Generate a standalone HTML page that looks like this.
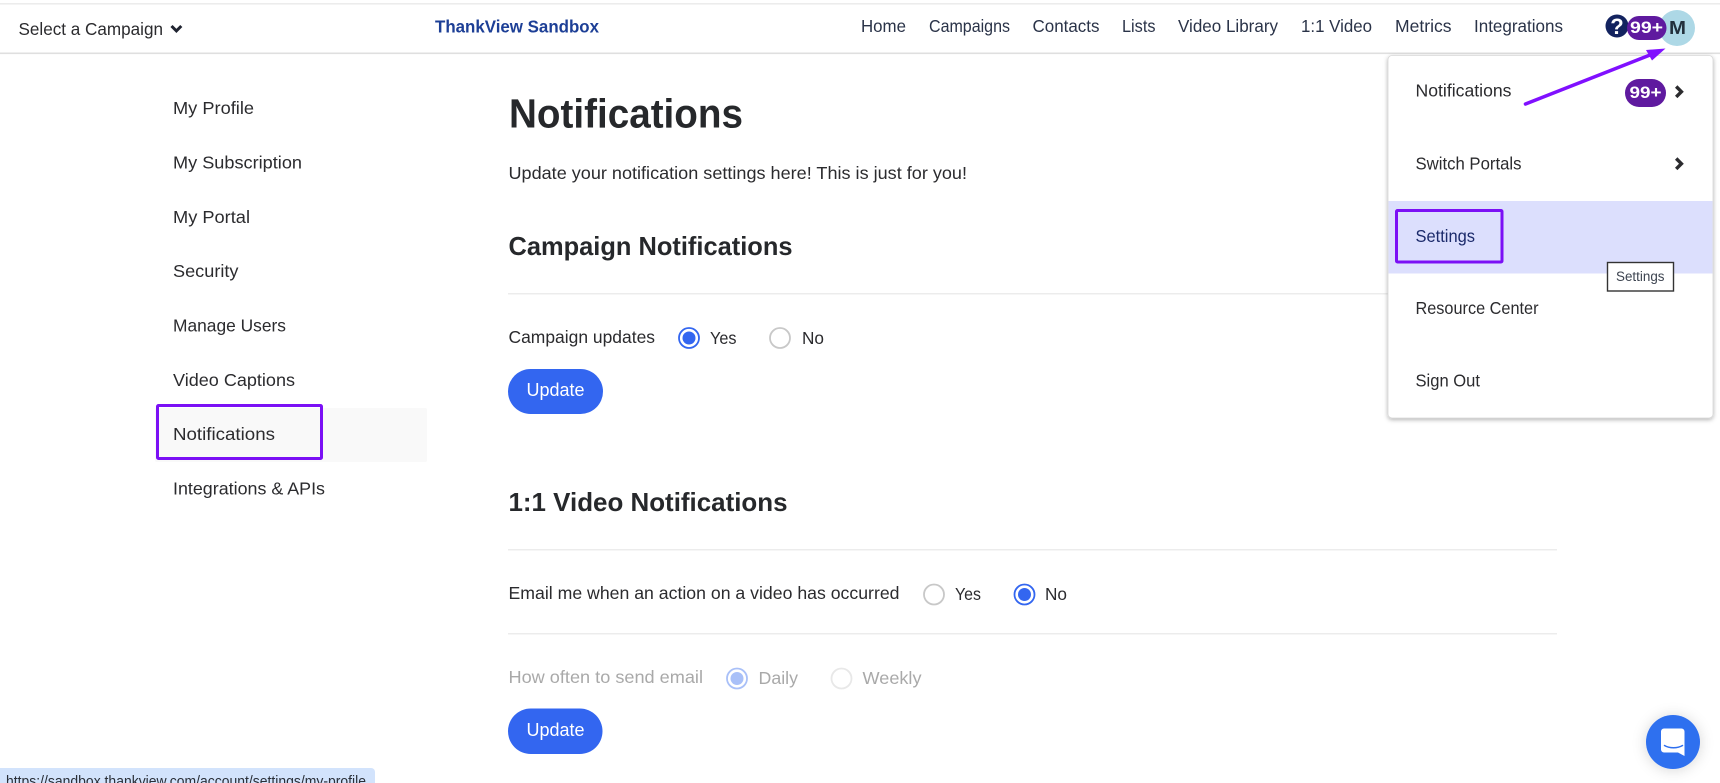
<!DOCTYPE html>
<html lang="en">
<head>
<meta charset="utf-8">
<title>Notifications</title>
<style>
html,body{margin:0;padding:0;width:1720px;height:783px;overflow:hidden;background:#fff}
svg{display:block;position:absolute;left:0;top:0}
text{font-family:"Liberation Sans",sans-serif;font-size:17.5px;fill:#2b2b2e}
.n{fill:#2a3348}
.h{font-weight:700}
.g{fill:#a9a9a9}
.w{fill:#fff}
</style>
</head>
<body>
<svg width="1720" height="783" viewBox="0 0 1720 783" xmlns="http://www.w3.org/2000/svg">
<defs>
<filter id="s" x="-10%" y="-10%" width="120%" height="120%"><feDropShadow dx="0" dy="1.5" stdDeviation="2" flood-color="#000" flood-opacity=".3"/></filter>
<filter id="c" x="-60%" y="-60%" width="220%" height="220%"><feDropShadow dx="0" dy="1" stdDeviation="7" flood-color="#000" flood-opacity=".16"/></filter>
</defs>
<rect width="1720" height="783" fill="#fff"/>
<!-- header -->
<rect x="0" y="3" width="1720" height="1.6" fill="#ececec"/>
<rect x="0" y="52.5" width="1720" height="1.6" fill="#dfdfdf"/>
<text x="18.5" y="35" textLength="144.5" lengthAdjust="spacingAndGlyphs">Select a Campaign</text>
<path d="M171.5 26l4.9 4.900 4.900-4.900" fill="none" stroke="#1f2330" stroke-width="3"/>
<text x="435" y="32.7" textLength="164" lengthAdjust="spacingAndGlyphs" class="h" style="fill:#1d3f96">ThankView Sandbox</text>
<text class="n" x="861" y="32" textLength="45" lengthAdjust="spacingAndGlyphs">Home</text>
<text class="n" x="929" y="32" textLength="81" lengthAdjust="spacingAndGlyphs">Campaigns</text>
<text class="n" x="1032.500" y="32" textLength="67" lengthAdjust="spacingAndGlyphs">Contacts</text>
<text class="n" x="1122" y="32" textLength="33.500" lengthAdjust="spacingAndGlyphs">Lists</text>
<text class="n" x="1178" y="32" textLength="100" lengthAdjust="spacingAndGlyphs">Video Library</text>
<text class="n" x="1301" y="32" textLength="71" lengthAdjust="spacingAndGlyphs">1:1 Video</text>
<text class="n" x="1395" y="32" textLength="56.500" lengthAdjust="spacingAndGlyphs">Metrics</text>
<text class="n" x="1474" y="32" textLength="89" lengthAdjust="spacingAndGlyphs">Integrations</text>
<circle cx="1617" cy="26" r="11.500" fill="#13235f"/>
<text class="w h" x="1617" y="34" text-anchor="middle" style="font-size:22px">?</text>
<circle cx="1677" cy="28" r="18" fill="#add8e6"/>
<rect x="1627" y="16" width="39.500" height="24" rx="12" fill="#5f1a9f"/>
<text class="w h" x="1630" y="33" textLength="33" lengthAdjust="spacingAndGlyphs" style="font-size:17px">99+</text>
<text class="h" x="1669" y="34" textLength="17" lengthAdjust="spacingAndGlyphs" style="fill:#22303c;font-size:18px">M</text>
<!-- sidebar -->
<rect x="155" y="408" width="272" height="54" rx="2" fill="#f9f9f9"/>
<text x="173" y="114" textLength="81" lengthAdjust="spacingAndGlyphs">My Profile</text>
<text x="173" y="168.400" textLength="129" lengthAdjust="spacingAndGlyphs">My Subscription</text>
<text x="173" y="222.800" textLength="77" lengthAdjust="spacingAndGlyphs">My Portal</text>
<text x="173" y="277.200" textLength="65.500" lengthAdjust="spacingAndGlyphs">Security</text>
<text x="173" y="331.600" textLength="113" lengthAdjust="spacingAndGlyphs">Manage Users</text>
<text x="173" y="386" textLength="122" lengthAdjust="spacingAndGlyphs">Video Captions</text>
<text x="173" y="440" textLength="102" lengthAdjust="spacingAndGlyphs">Notifications</text>
<text x="173" y="494.400" textLength="152" lengthAdjust="spacingAndGlyphs">Integrations &amp; APIs</text>
<rect x="157.500" y="405.500" width="164" height="53" rx="1" fill="none" stroke="#7b10f5" stroke-width="3"/>
<!-- main -->
<text x="509" y="127.500" textLength="234" lengthAdjust="spacingAndGlyphs" class="h" style="font-size:41px;fill:#26282b">Notifications</text>
<text x="508.500" y="179" textLength="458.500" lengthAdjust="spacingAndGlyphs">Update your notification settings here! This is just for you!</text>
<text x="508.500" y="255" textLength="284" lengthAdjust="spacingAndGlyphs" class="h" style="font-size:26px;fill:#26282b">Campaign Notifications</text>
<rect x="508" y="293" width="1049" height="1.500" fill="#ececec"/>
<text x="508.500" y="343" textLength="146.500" lengthAdjust="spacingAndGlyphs">Campaign updates</text>
<circle cx="689" cy="338" r="10" fill="#fff" stroke="#3366f0" stroke-width="1.800"/>
<circle cx="689" cy="338" r="6.500" fill="#3366f0"/>
<text x="710" y="344" textLength="26.500" lengthAdjust="spacingAndGlyphs">Yes</text>
<circle cx="780" cy="338" r="10" fill="#fff" stroke="#c8c8c8" stroke-width="1.800"/>
<text x="802" y="344" textLength="22" lengthAdjust="spacingAndGlyphs">No</text>
<rect x="508" y="369" width="95" height="45" rx="22.500" fill="#3366f0"/>
<text class="w" x="526.500" y="396" textLength="58" lengthAdjust="spacingAndGlyphs" style="font-size:18px">Update</text>

<text x="508.500" y="511" textLength="279" lengthAdjust="spacingAndGlyphs" class="h" style="font-size:26px;fill:#26282b">1:1 Video Notifications</text>
<rect x="508" y="549" width="1049" height="1.500" fill="#ececec"/>
<text x="508.500" y="599" textLength="391" lengthAdjust="spacingAndGlyphs">Email me when an action on a video has occurred</text>
<circle cx="934" cy="594.500" r="10" fill="#fff" stroke="#c8c8c8" stroke-width="1.800"/>
<text x="955" y="600" textLength="26" lengthAdjust="spacingAndGlyphs">Yes</text>
<circle cx="1024.500" cy="594.500" r="10" fill="#fff" stroke="#3366f0" stroke-width="1.800"/>
<circle cx="1024.500" cy="594.500" r="6.500" fill="#3366f0"/>
<text x="1045" y="600" textLength="22" lengthAdjust="spacingAndGlyphs">No</text>
<rect x="508" y="633" width="1049" height="1.500" fill="#ececec"/>
<text class="g" x="508.500" y="683" textLength="194.500" lengthAdjust="spacingAndGlyphs">How often to send email</text>
<circle cx="737" cy="678.500" r="10" fill="#fff" stroke="#a9c0f8" stroke-width="1.800"/>
<circle cx="737" cy="678.500" r="6.500" fill="#a9c0f8"/>
<text class="g" x="758.500" y="684" textLength="39.500" lengthAdjust="spacingAndGlyphs">Daily</text>
<circle cx="841.500" cy="678.500" r="10" fill="#fff" stroke="#e8e8e8" stroke-width="1.800"/>
<text class="g" x="862.500" y="684" textLength="59" lengthAdjust="spacingAndGlyphs">Weekly</text>
<rect x="508" y="708.500" width="94.500" height="45.500" rx="22.700" fill="#3366f0"/>
<text class="w" x="526.500" y="736" textLength="58" lengthAdjust="spacingAndGlyphs" style="font-size:18px">Update</text>
<!-- dropdown -->
<rect x="1388" y="55.500" width="325" height="362.500" rx="4" fill="#fff" stroke="#d8d8d8" stroke-width=".8" filter="url(#s)"/>
<text x="1415.500" y="96.500" textLength="96" lengthAdjust="spacingAndGlyphs">Notifications</text>
<rect x="1625" y="79" width="41" height="28" rx="14" fill="#5f1a9f"/>
<text class="w h" x="1629.500" y="98" textLength="32" lengthAdjust="spacingAndGlyphs" style="font-size:17px">99+</text>
<path d="M1676.200 86.500l5.200 5.200-5.200 5.200" fill="none" stroke="#2b2b2e" stroke-width="3.400"/>
<text x="1415.500" y="169.500" textLength="106" lengthAdjust="spacingAndGlyphs">Switch Portals</text>
<path d="M1676.200 158.500l5.200 5.200-5.200 5.200" fill="none" stroke="#2b2b2e" stroke-width="3.400"/>
<rect x="1388.500" y="201" width="324" height="72.500" fill="#dcdffd"/>
<text x="1415.500" y="242" textLength="59.500" lengthAdjust="spacingAndGlyphs" style="fill:#1b2a6b">Settings</text>
<rect x="1396.500" y="210.500" width="105.500" height="51.500" rx="1" fill="none" stroke="#7b10f5" stroke-width="3"/>
<text x="1415.500" y="314" textLength="123" lengthAdjust="spacingAndGlyphs">Resource Center</text>
<text x="1415.500" y="386.500" textLength="64.500" lengthAdjust="spacingAndGlyphs">Sign Out</text>
<rect x="1607.500" y="262.500" width="66" height="28.500" fill="#fff" stroke="#333" stroke-width="1.400"/>
<text x="1616" y="281" textLength="48.500" lengthAdjust="spacingAndGlyphs" style="font-size:13.500px;fill:#3d4450">Settings</text>
<!-- annotation arrow -->
<path d="M1525.500 104L1650 55" fill="none" stroke="#8010ff" stroke-width="3.600" stroke-linecap="round"/>
<path d="M1665.500 48.500L1646 50L1652 60.500Z" fill="#8010ff"/>
<!-- chat -->
<circle cx="1673" cy="742" r="27" fill="#2e6fef" filter="url(#c)"/>
<path d="M1664 728.500h17.500a3 3 0 0 1 3 3v24.500l-6.500-3.500h-14a3 3 0 0 1-3-3v-18a3 3 0 0 1 3-3z" fill="#fff"/>
<path d="M1664.500 745.500c5 3 13 3 18 0" fill="none" stroke="#2e6fef" stroke-width="1.500" stroke-linecap="round"/>
<!-- status bar -->
<path d="M0 768H371a4 4 0 0 1 4 4V783H0Z" fill="#d2e3fc"/>
<text x="6" y="786" textLength="360" lengthAdjust="spacingAndGlyphs" style="font-size:14.500px;fill:#2a2f38">https://sandbox.thankview.com/account/settings/my-profile</text>
</svg>
</body>
</html>
